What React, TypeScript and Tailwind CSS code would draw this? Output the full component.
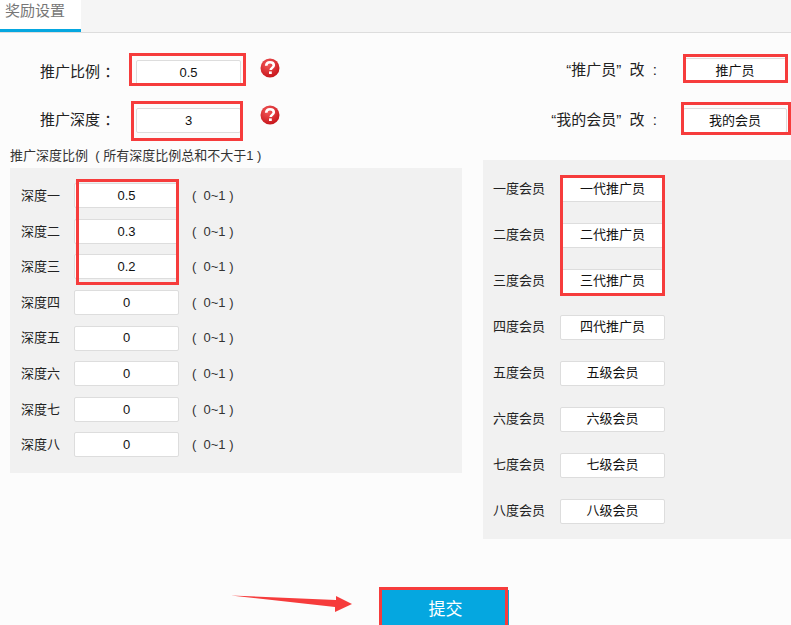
import React from 'react';

const depthRows = [
  { label: '深度一', value: '0.5' },
  { label: '深度二', value: '0.3' },
  { label: '深度三', value: '0.2' },
  { label: '深度四', value: '0' },
  { label: '深度五', value: '0' },
  { label: '深度六', value: '0' },
  { label: '深度七', value: '0' },
  { label: '深度八', value: '0' },
];

const memberRows = [
  { label: '一度会员', value: '一代推广员' },
  { label: '二度会员', value: '二代推广员' },
  { label: '三度会员', value: '三代推广员' },
  { label: '四度会员', value: '四代推广员' },
  { label: '五度会员', value: '五级会员' },
  { label: '六度会员', value: '六级会员' },
  { label: '七度会员', value: '七级会员' },
  { label: '八度会员', value: '八级会员' },
];

const Field = ({ value, className = '' }: { value: string; className?: string }) => (
  <div
    className={`h-[25px] bg-white border border-[#dddddd] rounded-[2px] flex items-center justify-center text-[13px] text-[#111] ${className}`}
  >
    {value}
  </div>
);

const HelpIcon = ({ className = '' }: { className?: string }) => (
  <svg width="20" height="20" viewBox="0 0 20 20" className={className}>
    <defs>
      <radialGradient id="help" cx="40%" cy="30%" r="75%">
        <stop offset="0%" stopColor="#f45a5a" />
        <stop offset="100%" stopColor="#c51218" />
      </radialGradient>
    </defs>
    <circle cx="10" cy="10" r="9.5" fill="url(#help)" />
    <path
      d="M6.2 7.8C6.3 5.3 8 4.2 10 4.2c2.2 0 3.8 1.2 3.8 3.1 0 1.4-.9 2.1-1.8 2.7-.9.6-1.3 1-1.3 2"
      fill="none"
      stroke="#fff"
      strokeWidth="2.6"
    />
    <rect x="9" y="13.4" width="2.8" height="2.6" fill="#fff" />
  </svg>
);

const RedBox = ({ className }: { className: string }) => (
  <div className={`absolute border-[3px] border-[#f63c3c] pointer-events-none ${className}`} />
);

export default function App() {
  return (
    <div
      className="relative h-[625px] overflow-hidden bg-[#fcfcfc] text-[#222]"
      style={{ fontFamily: '"Liberation Sans", "Noto Sans CJK SC", sans-serif' }}
    >
      {/* Tabs */}
      <div className="h-[33px] bg-[#f5f5f5] border-b border-[#dddddd]">
        <div className="w-[81px] h-[32px] bg-white border-b-[3px] border-[#05a7e0] pl-[5px] text-[15px] leading-[22px] text-[#777]">
          奖励设置
        </div>
      </div>

      {/* Top settings */}
      <div className="flex justify-between h-[135px]">
        <div className="pt-[27px] pl-[40px]">
          <div className="flex items-center h-[25px]">
            <span className="w-[96px] text-[15px] text-[#222] whitespace-pre">推广比例 ：</span>
            <Field value="0.5" className="w-[105px]" />
            <HelpIcon className="ml-[19px] -mt-[9px]" />
          </div>
          <div className="flex items-center h-[25px] mt-[23px]">
            <span className="w-[96px] text-[15px] text-[#222] whitespace-pre">推广深度 ：</span>
            <Field value="3" className="w-[105px]" />
            <HelpIcon className="ml-[19px] -mt-[11px]" />
          </div>
        </div>
        <div className="pt-[25px] pr-[4px] flex flex-col items-end">
          <div className="flex items-center h-[25px]">
            <span className="text-[15px] mr-[26px] whitespace-pre">“推广员”  改  :</span>
            <Field value="推广员" className="w-[104px]" />
          </div>
          <div className="flex items-center h-[25px] mt-[25px]">
            <span className="text-[15px] mr-[26px] whitespace-pre">“我的会员”  改  :</span>
            <Field value="我的会员" className="w-[104px]" />
          </div>
        </div>
      </div>

      <div className="flex items-start">
        {/* Depth ratios */}
        <div className="ml-[10px] w-[452px] -mt-[24px]">
          <p className="text-[13px] leading-[24px] text-[#333] whitespace-pre">
            推广深度比例  ( 所有深度比例总和不大于1 )
          </p>
          <div className="h-[305px] bg-[#f1f1f1] pt-[10px] pl-[11px]">
            {depthRows.map((row) => (
              <div key={row.label} className="flex items-center h-[35.6px]">
                <span className="w-[53px] text-[13px] text-[#222]">{row.label}</span>
                <Field value={row.value} className="w-[105px]" />
                <span className="ml-[13px] text-[13px] text-[#333] whitespace-pre">(  0~1 )</span>
              </div>
            ))}
          </div>
        </div>

        {/* Member names */}
        <div className="ml-[21px] flex-1 -mt-[8px] h-[379px] bg-[#f1f1f1] pt-[6px] pl-[10px]">
          {memberRows.map((row) => (
            <div key={row.label} className="flex items-center h-[46px]">
              <span className="w-[67px] text-[13px] text-[#222]">{row.label}</span>
              <Field value={row.value} className="w-[105px]" />
            </div>
          ))}
        </div>
      </div>

      {/* Submit */}
      <div className="absolute left-[382px] top-[590px] w-[127px] h-[35px]">
        <button className="w-full h-full bg-[#05a7e0] text-white text-[17px] pt-[5px]">提交</button>
      </div>

      {/* Annotations */}
      <RedBox className="left-[129px] top-[53px] w-[117px] h-[33px]" />
      <RedBox className="left-[131px] top-[101px] w-[112px] h-[40px]" />
      <RedBox className="left-[683px] top-[54px] w-[105px] h-[29px]" />
      <RedBox className="left-[681px] top-[102px] w-[110px] h-[33px]" />
      <RedBox className="left-[76px] top-[179px] w-[103px] h-[106px]" />
      <RedBox className="left-[560px] top-[175px] w-[105px] h-[121px]" />
      <RedBox className="left-[379px] top-[587px] w-[129px] h-[42px]" />
      <svg className="absolute left-[230px] top-[592px]" width="125" height="24" viewBox="0 0 125 24">
        <polygon points="1,3.5 106,8 106,4 122,12 105,20 105,15" fill="#f63c3c" />
      </svg>
    </div>
  );
}
